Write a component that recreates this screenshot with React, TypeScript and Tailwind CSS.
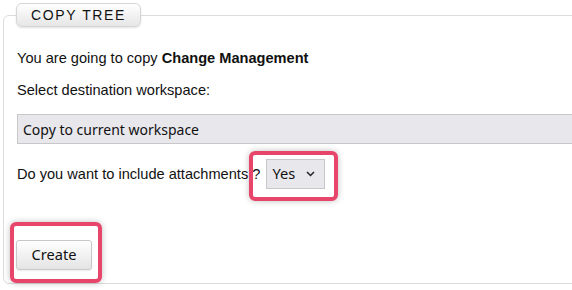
import React from "react";

export default function App() {
  return (
    <div className="relative w-[572px] h-[290px] overflow-hidden bg-white" style={{ fontFamily: '"Liberation Sans", Arial, sans-serif' }}>
      <div className="ml-[3px] mt-[15px] w-[620px] h-[269px] border border-[#dcdcdc] rounded-[6px] pl-[13px] pt-[34px] text-[14.6px] text-[#111]">
        <div className="leading-[16px]">
          You are going to copy <span className="font-bold">Change Management</span>
        </div>
        <div className="mt-[16px] leading-[16px]">Select destination workspace:</div>
        <div
          className="mt-[16px] h-[30px] w-[600px] border border-[#c8c8c8] bg-[#e8e7ec] flex items-center pl-[5px] text-[14px] text-[#111]"
          style={{ fontFamily: '"Noto Sans", "Open Sans", sans-serif' }}
        >
          Copy to current workspace
        </div>
        <div className="mt-[15px] flex items-center">
          <span className="leading-[16px]">Do you want to include attachments ?</span>
          <div
            className="ml-[6px] h-[30px] w-[59px] border border-[#c8c8c8] bg-[#e8e7ec] flex items-center pl-[5px] text-[14.6px]"
            style={{ fontFamily: '"Noto Sans", "Open Sans", sans-serif' }}
          >
            <span>Yes</span>
            <svg className="ml-[11px]" width="9" height="6" viewBox="0 0 9 6">
              <path d="M1 1 L4.5 4.5 L8 1" fill="none" stroke="#222" strokeWidth="1.5" />
            </svg>
          </div>
        </div>
        <div className="mt-[51px]">
          <button
            className="h-[30px] w-[76px] -ml-[1px] border border-[#c8c8c8] rounded-[3px] bg-gradient-to-b from-white to-[#e4e4e4] text-[14.6px] text-[#111] shadow-[0_1px_2px_rgba(0,0,0,0.08)]"
            style={{ fontFamily: '"Noto Sans", "Open Sans", sans-serif' }}
          >
            Create
          </button>
        </div>
      </div>

      <div className="absolute left-[16px] top-[3px] h-[24px] w-[125px] border border-[#d6d6d6] rounded-[6px] bg-gradient-to-b from-white to-[#e6e6e6] shadow-[0_1px_2px_rgba(0,0,0,0.12)] flex items-center justify-center text-[14px] tracking-[1.6px] text-[#111]">
        COPY TREE
      </div>

      <div className="absolute left-[249px] top-[151px] w-[89px] h-[50px] rounded-[6px] border-[4px] border-[#e8456b] shadow-[0_0_6px_rgba(0,0,0,0.25)]" />
      <div className="absolute left-[10px] top-[222px] w-[92px] h-[61px] rounded-[6px] border-[4px] border-[#e8456b] shadow-[0_0_6px_rgba(0,0,0,0.25)]" />
    </div>
  );
}
